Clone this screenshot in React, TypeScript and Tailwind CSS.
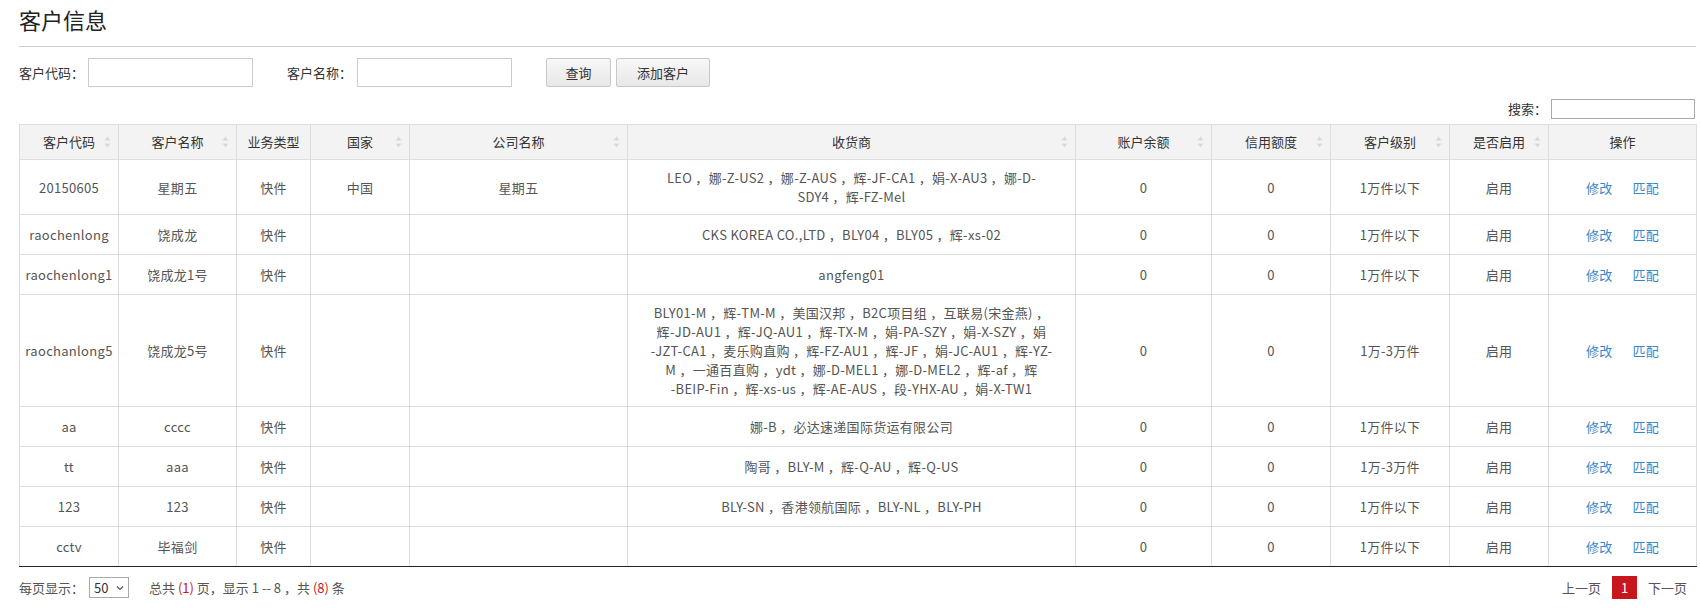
import React from 'react';

interface Customer {
  code: string;
  name: string;
  type: string;
  country: string;
  company: string;
  consignee: string[];
  balance: string;
  credit: string;
  level: string;
  enabled: string;
}

const customers: Customer[] = [
  {
    code: '20150605',
    name: '星期五',
    type: '快件',
    country: '中国',
    company: '星期五',
    consignee: ['LEO ，娜-Z-US2 ，娜-Z-AUS ，辉-JF-CA1 ，娟-X-AU3 ，娜-D-', 'SDY4 ，辉-FZ-Mel'],
    balance: '0',
    credit: '0',
    level: '1万件以下',
    enabled: '启用',
  },
  {
    code: 'raochenlong',
    name: '饶成龙',
    type: '快件',
    country: '',
    company: '',
    consignee: ['CKS KOREA CO.,LTD ，BLY04 ，BLY05 ，辉-xs-02'],
    balance: '0',
    credit: '0',
    level: '1万件以下',
    enabled: '启用',
  },
  {
    code: 'raochenlong1',
    name: '饶成龙1号',
    type: '快件',
    country: '',
    company: '',
    consignee: ['angfeng01'],
    balance: '0',
    credit: '0',
    level: '1万件以下',
    enabled: '启用',
  },
  {
    code: 'raochanlong5',
    name: '饶成龙5号',
    type: '快件',
    country: '',
    company: '',
    consignee: [
      'BLY01-M ，辉-TM-M ，美国汉邦 ，B2C项目组 ，互联易(宋金燕) ，',
      '辉-JD-AU1 ，辉-JQ-AU1 ，辉-TX-M ，娟-PA-SZY ，娟-X-SZY ，娟',
      '-JZT-CA1 ，麦乐购直购 ，辉-FZ-AU1 ，辉-JF ，娟-JC-AU1 ，辉-YZ-',
      'M ，一通百直购 ，ydt ，娜-D-MEL1 ，娜-D-MEL2 ，辉-af ，辉',
      '-BEIP-Fin ，辉-xs-us ，辉-AE-AUS ，段-YHX-AU ，娟-X-TW1',
    ],
    balance: '0',
    credit: '0',
    level: '1万-3万件',
    enabled: '启用',
  },
  {
    code: 'aa',
    name: 'cccc',
    type: '快件',
    country: '',
    company: '',
    consignee: ['娜-B ，必达速递国际货运有限公司'],
    balance: '0',
    credit: '0',
    level: '1万件以下',
    enabled: '启用',
  },
  {
    code: 'tt',
    name: 'aaa',
    type: '快件',
    country: '',
    company: '',
    consignee: ['陶哥 ，BLY-M ，辉-Q-AU ，辉-Q-US'],
    balance: '0',
    credit: '0',
    level: '1万-3万件',
    enabled: '启用',
  },
  {
    code: '123',
    name: '123',
    type: '快件',
    country: '',
    company: '',
    consignee: ['BLY-SN ，香港领航国际 ，BLY-NL ，BLY-PH'],
    balance: '0',
    credit: '0',
    level: '1万件以下',
    enabled: '启用',
  },
  {
    code: 'cctv',
    name: '毕福剑',
    type: '快件',
    country: '',
    company: '',
    consignee: [],
    balance: '0',
    credit: '0',
    level: '1万件以下',
    enabled: '启用',
  },
];

const columns = [
  { title: '客户代码', width: 99, sort: true },
  { title: '客户名称', width: 118, sort: true },
  { title: '业务类型', width: 74, sort: false },
  { title: '国家', width: 99, sort: true },
  { title: '公司名称', width: 218, sort: true },
  { title: '收货商', width: 448, sort: true },
  { title: '账户余额', width: 136, sort: true },
  { title: '信用额度', width: 119, sort: true },
  { title: '客户级别', width: 119, sort: true },
  { title: '是否启用', width: 99, sort: true },
  { title: '操作', width: 148, sort: false },
];

const SortIcon = () => (
  <svg width="7" height="12" viewBox="0 0 7 12" className="absolute right-[7px] top-1/2 -translate-y-1/2">
    <path d="M3.5 0.5 L6.5 4.5 L0.5 4.5 Z" fill="#d9d9d9" />
    <path d="M3.5 11.5 L6.5 7.5 L0.5 7.5 Z" fill="#d9d9d9" />
  </svg>
);

export default function App() {
  return (
    <div className="min-h-[608px] bg-white pl-[19px] pr-[4px] font-['Noto_Sans_CJK_SC',sans-serif] text-[13px] text-[#333]">
      {/* title */}
      <div className="h-[47px] border-b border-[#d0d0d0] pt-[4px]">
        <h1 className="text-[22px] leading-[30px] text-[#222]">客户信息</h1>
      </div>

      {/* query form */}
      <div className="mt-[11px] flex h-[29px] items-center">
        <span>客户代码：</span>
        <input className="ml-[4px] h-[29px] w-[165px] border border-[#ccc] outline-none" />
        <span className="ml-[34px]">客户名称：</span>
        <input className="ml-[5px] h-[29px] w-[155px] border border-[#ccc] outline-none" />
        <button className="ml-[34px] h-[29px] w-[65px] rounded-[2px] border border-[#c8c8c8] bg-gradient-to-b from-[#f7f7f7] to-[#e8e8e8] text-[#333]">
          查询
        </button>
        <button className="ml-[5px] h-[29px] w-[94px] rounded-[2px] border border-[#c8c8c8] bg-gradient-to-b from-[#f7f7f7] to-[#e8e8e8] text-[#333]">
          添加客户
        </button>
      </div>

      {/* search */}
      <div className="mt-[12px] flex h-[20px] items-center justify-end pr-[1px]">
        <span>搜索：</span>
        <input className="ml-[4px] h-[20px] w-[144px] border border-[#aaa] outline-none" />
      </div>

      {/* table */}
      <table className="mt-[5px] w-[1677px] table-fixed border-collapse text-center">
        <colgroup>
          {columns.map((c) => (
            <col key={c.title} style={{ width: c.width }} />
          ))}
        </colgroup>
        <thead>
          <tr className="h-[35px] bg-[#f3f3f3]">
            {columns.map((c) => (
              <th key={c.title} className="relative border border-[#ddd] font-normal text-[#333]">
                {c.title}
                {c.sort && <SortIcon />}
              </th>
            ))}
          </tr>
        </thead>
        <tbody className="text-[#555] tracking-[0.3px]">
          {customers.map((row, i) => {
            const last = i === customers.length - 1;
            const td = `border border-[#ddd] px-[4px] py-[8px] leading-[19px] ${last ? 'border-b-[#222]' : ''}`;
            return (
              <tr key={row.code} className="h-[40px]">
                <td className={td}>{row.code}</td>
                <td className={td}>{row.name}</td>
                <td className={td}>{row.type}</td>
                <td className={td}>{row.country}</td>
                <td className={td}>{row.company}</td>
                <td className={td}>
                  {row.consignee.map((line, j) => (
                    <div key={j} className="whitespace-nowrap">
                      {line}
                    </div>
                  ))}
                </td>
                <td className={td}>{row.balance}</td>
                <td className={td}>{row.credit}</td>
                <td className={td}>{row.level}</td>
                <td className={td}>{row.enabled}</td>
                <td className={td}>
                  <div className="flex justify-center gap-[20px] text-[#3a87c8]">
                    <a href="#">修改</a>
                    <a href="#">匹配</a>
                  </div>
                </td>
              </tr>
            );
          })}
        </tbody>
      </table>

      {/* footer */}
      <div className="mt-[9px] flex h-[23px] w-[1677px] items-center justify-between pr-[9px] text-[#555]">
        <div className="flex items-center">
          <span>每页显示：</span>
          <div className="ml-[5px] flex h-[21px] w-[40px] items-center justify-between border border-[#aaa] px-[4px] text-[#333]">
            <span>50</span>
            <svg width="8" height="6" viewBox="0 0 8 6">
              <path d="M1 1.5 L4 4.5 L7 1.5" stroke="#555" strokeWidth="1.2" fill="none" />
            </svg>
          </div>
          <span className="ml-[20px]">
            总共 <span className="text-[#c8161d]">(1)</span> 页，显示 1 -- 8 ，共{' '}
            <span className="text-[#c8161d]">(8)</span> 条
          </span>
        </div>
        <div className="flex items-center">
          <span>上一页</span>
          <span className="ml-[11px] flex h-[23px] w-[25px] items-center justify-center bg-[#c8161d] text-white">1</span>
          <span className="ml-[11px]">下一页</span>
        </div>
      </div>
    </div>
  );
}
